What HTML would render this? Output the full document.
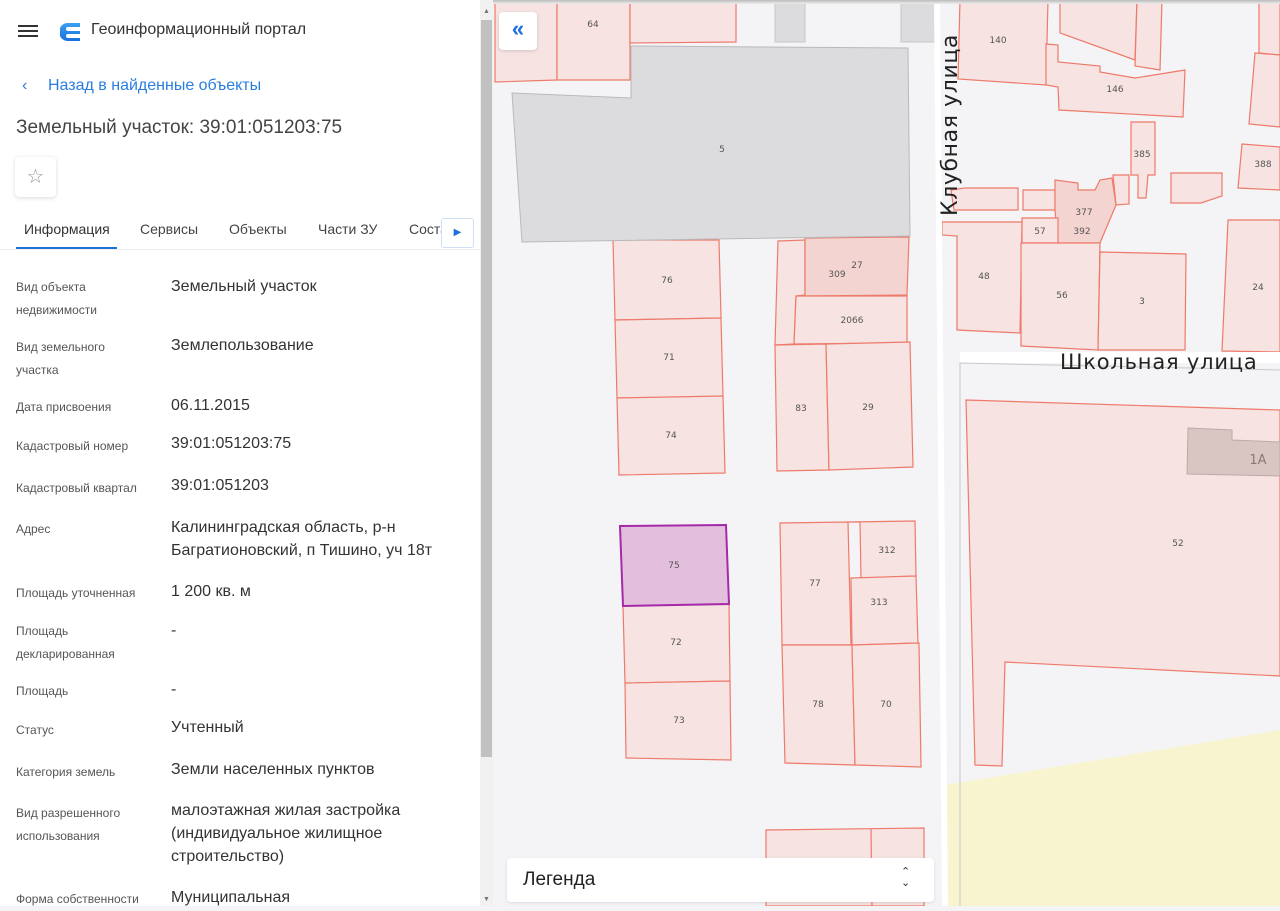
<!DOCTYPE html>
<html><head><meta charset="utf-8"><style>
*{margin:0;padding:0;box-sizing:border-box}
body{width:1280px;height:906px;overflow:hidden;position:relative;background:#f4f4f7;font-family:"Liberation Sans","DejaVu Sans",sans-serif}
.a{position:absolute;white-space:nowrap}
.lb{position:absolute;left:16px;font-size:12px;line-height:23px;color:#555}
.vl{position:absolute;left:171px;font-size:16px;line-height:23px;color:#333}
#panel{position:absolute;left:0;top:0;width:480px;height:906px;background:#fff}
</style></head><body>
<svg class="a" style="left:0;top:0" width="1280" height="906" viewBox="0 0 1280 906">
<g fill="#f6e3e2" stroke="#ee7a6a" stroke-width="1.2">
<polygon points="495,0 557,0 557,80 495,82"/>
<polygon points="557,0 630,0 630,80 557,80"/>
<polygon points="630,0 736,0 736,42 630,43"/>
<polygon points="613,240 719,240 721,318 615,320"/>
<polygon points="615,320 721,318 723,397 617,398"/>
<polygon points="617,398 723,396 725,473 619,475"/>
<polygon points="778,241 805,240 805,295 796,296 794,344 775,345"/>
<polygon points="805,238 909,237 907,295 805,296" fill="#f3d4d0"/>
<polygon points="796,296 907,296 907,343 794,344"/>
<polygon points="775,345 826,344 829,470 777,471"/>
<polygon points="826,344 910,342 913,467 829,470"/>
<polygon points="623,606 729,604 730,681 625,683"/>
<polygon points="625,683 730,681 731,760 626,758"/>
<polygon points="780,523 848,522 851,645 782,645"/>
<polygon points="848,522 915,521 916,576 861,578 860,522"/>
<polygon points="851,578 916,576 918,643 852,645"/>
<polygon points="782,645 852,645 855,765 785,763"/>
<polygon points="852,645 919,643 921,767 855,765"/>
<polygon points="766,830 924,828 924,906 766,906"/>
<line x1="871" y1="829" x2="872" y2="906"/>
<polygon points="960,0 1048,0 1046,85 958,79"/>
<polygon points="1060,0 1137,0 1135,60 1060,33"/>
<polygon points="1137,0 1162,0 1160,70 1135,66"/>
<polygon points="1046,44 1058,45 1058,62 1100,66 1100,72 1135,78 1185,70 1183,117 1059,110 1058,87 1046,85"/>
<polygon points="1259,0 1280,0 1280,55 1259,53"/>
<polygon points="1255,53 1280,55 1280,127 1249,124"/>
<polygon points="1131,122 1155,122 1155,175 1148,175 1146,198 1138,198 1138,175 1131,175"/>
<polygon points="1242,144 1280,147 1280,190 1238,188"/>
<polygon points="951,190 965,188 1018,188 1018,210 954,210"/>
<polygon points="1023,190 1055,190 1055,210 1023,210"/>
<polygon points="1055,180 1078,183 1078,190 1095,190 1100,180 1112,178 1116,205 1100,243 1058,243 1055,210" fill="#f3d4d0"/>
<polygon points="1113,175 1129,175 1129,204 1116,205"/>
<polygon points="1171,173 1222,173 1222,196 1201,203 1171,203"/>
<polygon points="1022,218 1058,218 1058,243 1022,243"/>
<polygon points="942,222 1022,222 1020,333 957,330 957,236 942,235"/>
<polygon points="1021,243 1100,243 1098,350 1021,346"/>
<polygon points="1100,252 1186,254 1185,350 1098,350"/>
<polygon points="1228,220 1280,220 1280,352 1222,351"/>
<polygon points="966,400 1280,410 1280,676 1005,662 1002,766 975,765"/>
</g>
<polygon points="512,93 631,98 631,46 908,48 910,236 522,242" fill="#dcdcde" stroke="#b9b9bd"/>
<rect x="775" y="0" width="30" height="42" fill="#dcdcde" stroke="#c6c6c6"/>
<rect x="901" y="0" width="34" height="42" fill="#dcdcde" stroke="#c6c6c6"/>
<polygon points="1188,428 1232,430 1232,440 1280,442 1280,476 1187,474" fill="#d9c6c3" stroke="#bbaaa8"/>
<polygon points="620,526 726,525 729,604 623,606" fill="#e4bedd" stroke="#a52aa8" stroke-width="2"/>
<polygon points="945,785 1280,730 1280,906 945,906" fill="#f8f3cc" opacity="0.95"/>
<polygon points="934,0 940,0 948,906 942,906" fill="#fff"/>
<polygon points="960,352 1280,352 1280,363 960,363" fill="#fff"/>
<polyline points="960,906 960,363 1280,370" fill="none" stroke="#c8c8cc"/>
<g font-family="DejaVu Sans,sans-serif" font-size="9" fill="#555" text-anchor="middle">
<text x="593" y="27">64</text><text x="722" y="152">5</text><text x="667" y="283">76</text><text x="669" y="360">71</text><text x="671" y="438">74</text>
<text x="837" y="277">309</text><text x="857" y="268">27</text><text x="852" y="323">2066</text><text x="801" y="411">83</text><text x="868" y="410">29</text>
<text x="674" y="568">75</text><text x="676" y="645">72</text><text x="679" y="723">73</text><text x="815" y="586">77</text><text x="887" y="553">312</text><text x="879" y="605">313</text><text x="818" y="707">78</text><text x="886" y="707">70</text>
<text x="998" y="43">140</text><text x="1115" y="92">146</text><text x="1142" y="157">385</text><text x="1263" y="167">388</text><text x="1084" y="215">377</text><text x="1040" y="234">57</text><text x="1082" y="234">392</text>
<text x="984" y="279">48</text><text x="1062" y="298">56</text><text x="1142" y="304">3</text><text x="1258" y="290">24</text><text x="1178" y="546">52</text>
</g>
<text x="1258" y="464" font-family="DejaVu Sans,sans-serif" font-size="13" fill="#8a7a78" text-anchor="middle">1A</text>
<text x="1060" y="369" font-family="DejaVu Sans,sans-serif" font-size="21" fill="#222" letter-spacing="0.8">Школьная  улица</text>
<text transform="translate(957,216) rotate(-90)" font-family="DejaVu Sans,sans-serif" font-size="22" fill="#222" letter-spacing="0.6">Клубная  улица</text>
</svg>
<div class="a" style="left:0;top:0;width:1280px;height:4px;background:linear-gradient(#bbb,#eee)"></div>
<div class="a" style="left:499px;top:12px;width:38px;height:38px;background:#fff;border-radius:4px;box-shadow:0 1px 3px rgba(0,0,0,.15);color:#1e6fe0;font-size:22px;font-weight:bold;text-align:center;line-height:34px">«</div>
<div class="a" style="left:507px;top:858px;width:427px;height:44px;background:#fff;border-radius:4px;box-shadow:0 1px 3px rgba(0,0,0,.1)">
<span class="a" style="left:16px;top:11px;font-size:19px;color:#222">Легенда</span>
<span class="a" style="left:394px;top:9px;font-size:11px;line-height:11px;color:#333">⌃<br>⌄</span></div>

<div id="panel">
<div class="a" style="left:18px;top:25px;width:20px;height:2px;background:#333;box-shadow:0 5px 0 #333,0 10px 0 #333"></div>
<svg class="a" style="left:60px;top:21px" width="22" height="22" viewBox="0 0 22 22"><defs><linearGradient id="g" x1="0" y1="0" x2="0" y2="1"><stop offset="0" stop-color="#3aa0f0"/><stop offset="1" stop-color="#1a6fe0"/></linearGradient></defs><path d="M8 2h12v4H8a2 2 0 0 0 0 4h12v3H8a2 2 0 0 0 0 4h12v3H8A7 7 0 0 1 8 2z" fill="url(#g)"/></svg>
<div class="a" style="left:91px;top:21px;font-size:16px;color:#333">Геоинформационный портал</div>
<div class="a" style="left:22px;top:77px;font-size:16px;color:#2a7de0">‹</div>
<div class="a" style="left:48px;top:77px;font-size:16px;color:#2a7de0">Назад в найденные объекты</div>
<div class="a" style="left:16px;top:117px;font-size:19px;color:#444">Земельный участок: 39:01:051203:75</div>
<div class="a" style="left:15px;top:157px;width:41px;height:40px;background:#fff;border-radius:4px;box-shadow:0 1px 4px rgba(0,0,0,.15);color:#999;font-size:20px;text-align:center;line-height:40px">☆</div>
<div class="a" style="left:24px;top:221px;font-size:14px;color:#333">Информация</div>
<div class="a" style="left:140px;top:221px;font-size:14px;color:#444">Сервисы</div>
<div class="a" style="left:229px;top:221px;font-size:14px;color:#444">Объекты</div>
<div class="a" style="left:318px;top:221px;font-size:14px;color:#444">Части ЗУ</div>
<div class="a" style="left:409px;top:221px;font-size:14px;color:#444">Соста</div>
<div class="a" style="left:441px;top:218px;width:33px;height:30px;background:#fff;border:1px solid #cfe0f5;border-radius:3px;color:#1e6fe0;font-size:10px;text-align:center;line-height:28px">▶</div>
<div class="a" style="left:16px;top:247px;width:101px;height:2px;background:#1976d2"></div>
<div class="a" style="left:0;top:249px;width:480px;height:1px;background:#eee"></div>
<div class="lb" style="top:276px">Вид объекта<br>недвижимости</div><div class="vl" style="top:275px">Земельный участок</div>
<div class="lb" style="top:336px">Вид земельного<br>участка</div><div class="vl" style="top:334px">Землепользование</div>
<div class="lb" style="top:396px">Дата присвоения</div><div class="vl" style="top:394px">06.11.2015</div>
<div class="lb" style="top:435px">Кадастровый номер</div><div class="vl" style="top:432px">39:01:051203:75</div>
<div class="lb" style="top:477px">Кадастровый квартал</div><div class="vl" style="top:474px">39:01:051203</div>
<div class="lb" style="top:518px">Адрес</div><div class="vl" style="top:516px">Калининградская область, р-н<br>Багратионовский, п Тишино, уч 18т</div>
<div class="lb" style="top:582px">Площадь уточненная</div><div class="vl" style="top:580px">1 200 кв. м</div>
<div class="lb" style="top:620px">Площадь<br>декларированная</div><div class="vl" style="top:619px">-</div>
<div class="lb" style="top:680px">Площадь</div><div class="vl" style="top:678px">-</div>
<div class="lb" style="top:719px">Статус</div><div class="vl" style="top:716px">Учтенный</div>
<div class="lb" style="top:761px">Категория земель</div><div class="vl" style="top:758px">Земли населенных пунктов</div>
<div class="lb" style="top:802px">Вид разрешенного<br>использования</div><div class="vl" style="top:799px">малоэтажная жилая застройка<br>(индивидуальное жилищное<br>строительство)</div>
<div class="lb" style="top:888px">Форма собственности</div><div class="vl" style="top:886px">Муниципальная</div>
</div>
<div class="a" style="left:480px;top:0;width:13px;height:906px;background:#f1f1f1"></div>
<div class="a" style="left:481px;top:20px;width:11px;height:737px;background:#c1c1c1"></div>
<div class="a" style="left:483px;top:8px;font-size:7px;color:#777">▲</div>
<div class="a" style="left:483px;top:896px;font-size:7px;color:#777">▼</div>
</body></html>
